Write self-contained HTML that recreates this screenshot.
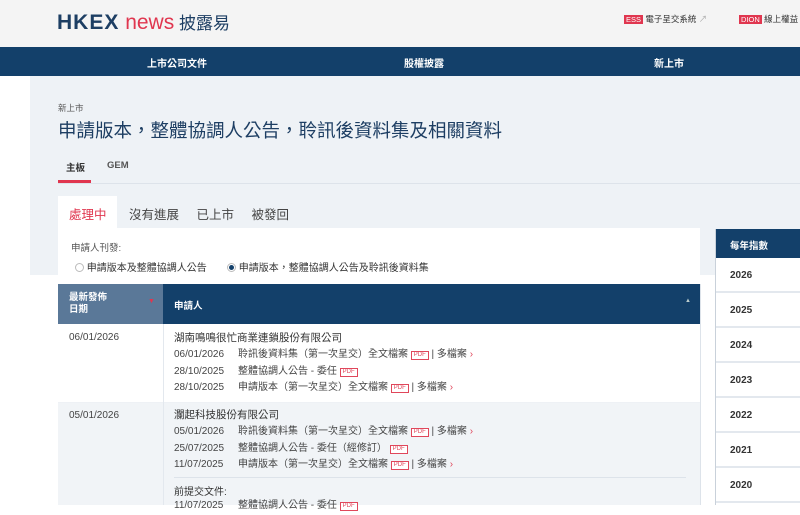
<!DOCTYPE html>
<html><head><meta charset="utf-8"><style>
*{margin:0;padding:0;box-sizing:border-box}
body{width:800px;height:505px;overflow:hidden;background:#fff;font-family:"Liberation Sans","Noto Sans CJK TC",sans-serif;color:#333;position:relative}
.a{position:absolute}
.hdr{left:0;top:0;width:800px;height:47px;background:#f4f4f4}
.nav{left:0;top:47px;width:800px;height:29px;background:#13406a;color:#fff;font-size:10px;font-weight:bold}
.hero{left:30px;top:76px;width:770px;height:199px;background:#eef2f6}
.pdf{display:inline-block;border:1px solid #e0475b;color:#e0475b;font-size:6px;line-height:7px;padding:0 2px;vertical-align:1px;background:#fff}
.ln{font-size:10px;color:#444;line-height:16.5px;white-space:nowrap}
.ln b{font-weight:normal;display:inline-block;width:64px}
.ar{color:#e0475b}
.yr{left:716px;width:84px;height:35px;border-bottom:2px solid #e3e8ee;font-size:10px;font-weight:bold;color:#333;padding:12px 0 0 14px}
</style></head><body>
<div class="a hdr">
 <div class="a" style="left:57px;top:9px;font-size:21px;font-weight:bold;color:#1d3e63;letter-spacing:1px">HKEX<span style="color:#e0364f;font-weight:normal;letter-spacing:0"> news</span><span style="font-size:17px;font-weight:normal;letter-spacing:0"> 披露易</span></div>
 <div class="a" style="left:624px;top:13px;font-size:8.5px;color:#333;white-space:nowrap"><span style="background:#e0364f;color:#fff;padding:0 2px;font-size:7.5px">ESS</span> 電子呈交系統 <span style="color:#aaa">↗</span></div>
 <div class="a" style="left:739px;top:13px;font-size:8.5px;color:#333;white-space:nowrap"><span style="background:#e0364f;color:#fff;padding:0 2px;font-size:7.5px">DION</span> 線上權益</div>
</div>
<div class="a nav"><span class="a" style="left:147px;top:8px">上市公司文件</span><span class="a" style="left:404px;top:8px">股權披露</span><span class="a" style="left:654px;top:8px">新上市</span></div>
<div class="a hero"></div>
<div class="a" style="left:58px;top:102px;font-size:8.5px;color:#555">新上市</div>
<div class="a" style="left:58px;top:117px;font-size:18.5px;color:#1d3e63;white-space:nowrap">申請版本，整體協調人公告，聆訊後資料集及相關資料</div>
<div class="a" style="left:66px;top:160px;font-size:9.5px;font-weight:bold;color:#333">主板</div>
<div class="a" style="left:107px;top:160px;font-size:9.5px;font-weight:bold;color:#555">GEM</div>
<div class="a" style="left:58px;top:180px;width:33px;height:3px;background:#e0364f"></div>
<div class="a" style="left:58px;top:183px;width:742px;height:1px;background:#dde3ea"></div>
<div class="a" style="left:58px;top:196px;width:59px;height:33px;background:#fff"></div>
<div class="a" style="left:69px;top:204px;font-size:12.5px;color:#e0364f">處理中</div>
<div class="a" style="left:129px;top:204px;font-size:12.5px;color:#444;word-spacing:14px">沒有進展 已上市 被發回</div>
<div class="a" style="left:58px;top:228px;width:642px;height:56px;background:#fff"></div>
<div class="a" style="left:71px;top:240px;font-size:9.5px;color:#555">申請人刊發:</div>
<div class="a" style="left:75px;top:259px;font-size:10px;color:#333;white-space:nowrap"><span style="display:inline-block;width:9px;height:9px;border:1px solid #bbb;border-radius:50%;vertical-align:-1px"></span> 申請版本及整體協調人公告</div>
<div class="a" style="left:227px;top:259px;font-size:10px;color:#333;white-space:nowrap"><span style="display:inline-block;width:9px;height:9px;border:1px solid #bbb;border-radius:50%;vertical-align:-1px;background:radial-gradient(#13406a 45%,#fff 55%)"></span> 申請版本，整體協調人公告及聆訊後資料集</div>
<div class="a" style="left:58px;top:284px;width:105px;height:40px;background:#5a7898;color:#fff;font-size:9.5px;font-weight:bold;padding:8px 0 0 11px;line-height:12px">最新發佈<br>日期<span class="a" style="left:90px;top:12px;color:#e0364f;font-size:7px">▼</span></div>
<div class="a" style="left:163px;top:284px;width:537px;height:40px;background:#13406a;color:#fff;font-size:9.5px;font-weight:bold;padding:14px 0 0 11px">申請人<span class="a" style="left:522px;top:14px;color:#bcc;font-size:6px">▲</span></div>
<div class="a" style="left:58px;top:324px;width:642px;height:79px;background:#fff;border-bottom:1px solid #eef1f5"></div>
<div class="a" style="left:58px;top:403px;width:642px;height:102px;background:#f1f4f7"></div>
<div class="a" style="left:163px;top:324px;width:1px;height:181px;background:#e3e8ee"></div>
<div class="a" style="left:700px;top:284px;width:1px;height:221px;background:#dde3ea"></div>
<div class="a" style="left:69px;top:332px;font-size:10px;color:#444">06/01/2026</div>
<div class="a" style="left:69px;top:410px;font-size:10px;color:#444">05/01/2026</div>
<div class="a" style="left:174px;top:330px">
 <div style="font-size:10.5px;color:#333;line-height:17px">湖南鳴鳴很忙商業連鎖股份有限公司</div>
 <div class="ln"><b>06/01/2026</b>聆訊後資料集（第一次呈交）全文檔案 <span class="pdf">PDF</span> | 多檔案 <span class="ar">›</span></div>
 <div class="ln"><b>28/10/2025</b>整體協調人公告 - 委任 <span class="pdf">PDF</span></div>
 <div class="ln"><b>28/10/2025</b>申請版本（第一次呈交）全文檔案 <span class="pdf">PDF</span> | 多檔案 <span class="ar">›</span></div>
</div>
<div class="a" style="left:174px;top:407px">
 <div style="font-size:10.5px;color:#333;line-height:17px">瀾起科技股份有限公司</div>
 <div class="ln"><b>05/01/2026</b>聆訊後資料集（第一次呈交）全文檔案 <span class="pdf">PDF</span> | 多檔案 <span class="ar">›</span></div>
 <div class="ln"><b>25/07/2025</b>整體協調人公告 - 委任（經修訂） <span class="pdf">PDF</span></div>
 <div class="ln"><b>11/07/2025</b>申請版本（第一次呈交）全文檔案 <span class="pdf">PDF</span> | 多檔案 <span class="ar">›</span></div>
</div>
<div class="a" style="left:174px;top:477px;width:512px;height:1px;background:#dde3ea"></div>
<div class="a" style="left:174px;top:483px;font-size:10px;color:#333">前提交文件:</div>
<div class="a ln" style="left:174px;top:498px"><b>11/07/2025</b>整體協調人公告 - 委任 <span class="pdf">PDF</span></div>
<div class="a" style="left:715px;top:229px;width:85px;height:276px;border-left:1px solid #c9d1da;background:#fff"></div>
<div class="a" style="left:716px;top:229px;width:84px;height:29px;background:#13406a;color:#fff;font-size:9.5px;font-weight:bold;padding:9px 0 0 14px">每年指數</div>
<div class="a yr" style="top:258px">2026</div>
<div class="a yr" style="top:293px">2025</div>
<div class="a yr" style="top:328px">2024</div>
<div class="a yr" style="top:363px">2023</div>
<div class="a yr" style="top:398px">2022</div>
<div class="a yr" style="top:433px">2021</div>
<div class="a yr" style="top:468px">2020</div>
</body></html>
